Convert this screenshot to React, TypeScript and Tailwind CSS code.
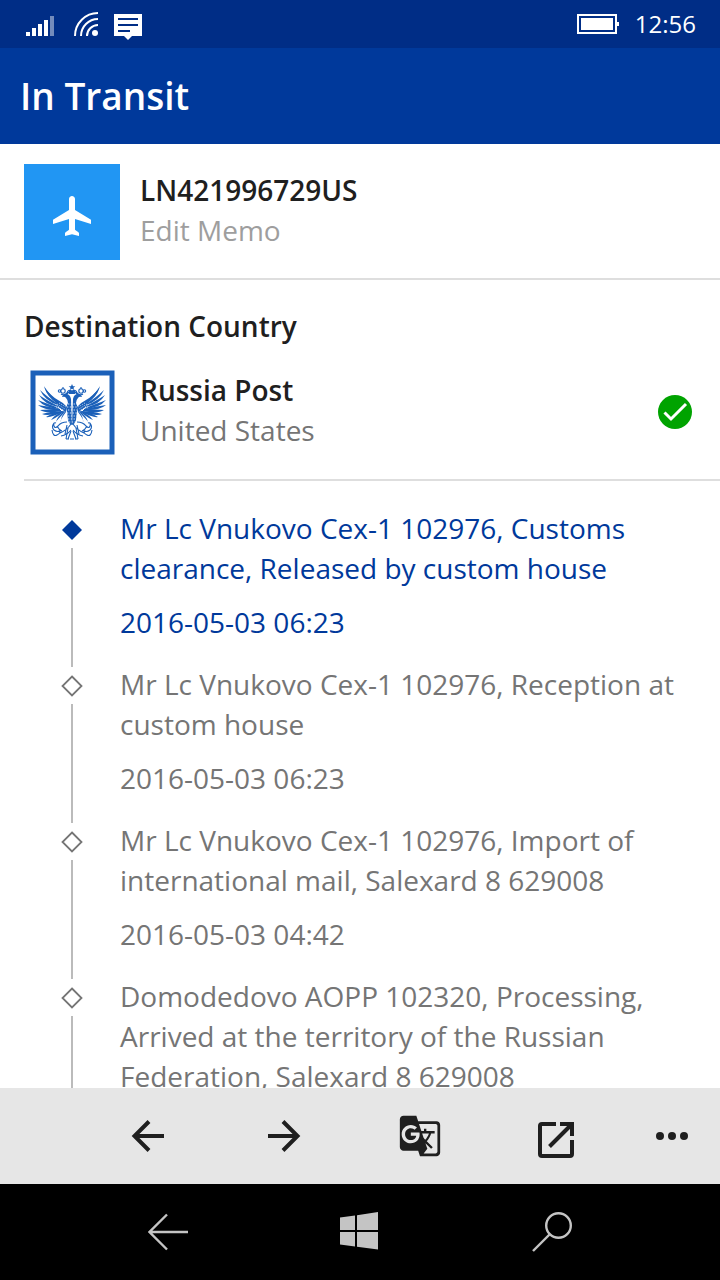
import React from "react";
import { MdGTranslate } from "react-icons/md";

type TrackEvent = {
    text: string;
    time: string;
};

const events: TrackEvent[] = [
    { text: "Mr Lc Vnukovo Cex-1 102976, Customs clearance, Released by custom house", time: "2016-05-03 06:23" },
    { text: "Mr Lc Vnukovo Cex-1 102976, Reception at custom house", time: "2016-05-03 06:23" },
    { text: "Mr Lc Vnukovo Cex-1 102976, Import of international mail, Salexard 8 629008", time: "2016-05-03 04:42" },
    { text: "Domodedovo AOPP 102320, Processing, Arrived at the territory of the Russian Federation, Salexard 8 629008", time: "2016-05-02 21:10" },
];

// wing feathers, from the root on the wing bone out to the tip
const feathers = [
    [28, 31, 14, 15],
    [28, 33, 10, 19],
    [28, 35, 9, 24],
    [29, 37, 8, 29],
    [30, 38, 8, 34],
    [31, 39, 10, 39],
    [32, 40, 12, 43],
    [33, 40, 16, 46],
    [34, 40, 21, 49],
    [35, 40, 26, 51],
    [36, 40, 31, 51],
];

function StatusBar() {
    return (
        <div className="flex h-12 shrink-0 items-center justify-between bg-[#002d86] px-6">
            <svg width="120" height="48" viewBox="24 0 120 48" fill="#fff">
                <path d="M26 32h4v4h-4zM32 28h4v8h-4zM38 24h4v12h-4zM44 20h4v16h-4z" />
                <path d="M50 16h4v20h-4z" opacity=".45" />
                <g fill="none" stroke="#fff" strokeWidth="2">
                    <path d="M75 36A23 23 0 0 1 98 13" />
                    <path d="M81 36A17 17 0 0 1 98 19" />
                    <path d="M87 36A11 11 0 0 1 98 25" />
                </g>
                <circle cx="95" cy="33" r="3" />
                <path fillRule="evenodd" d="M114 14h28v22h-10l-4 4l-4-4h-10zM118 18v2h20v-2zM118 24v2h20v-2zM118 30v2h12v-2z" />
            </svg>
            <div className="flex items-center gap-4">
                <svg width="42" height="20" viewBox="0 0 42 20" fill="#fff">
                    <path fillRule="evenodd" d="M0 0h40v20H0zM2 2v16h36V2z" />
                    <path d="M4 4h32v12H4zM40 8h2v4h-2z" />
                </svg>
                <span className="text-2xl leading-12 text-white">12:56</span>
            </div>
        </div>
    );
}

function PlaneIcon() {
    return (
        <svg width="48" height="48" viewBox="0 0 24 24" fill="#fff">
            <path d="M21.5 16v-2.1L13.5 9V3.5C13.5 2.7 12.8 2 12 2s-1.5.7-1.5 1.5V9l-8 4.9V16l8-2.5v5.2c0 .6-2 1-2 2V22l3.500-.9 3.500.9v-1.300c0-1-2-1.400-2-2v-5.200z" />
        </svg>
    );
}

function Wing() {
    return (
        <g>
            {feathers.map(([x, y, tx, ty]) => {
                const mx = (x + tx) / 2;
                const my = (y + ty) / 2;
                return <path key={`${tx}-${ty}`} d={`M${x} ${y}Q${mx - 3} ${my - 1} ${tx} ${ty}Q${mx - 4} ${my + 4} ${x} ${y + 1}z`} />;
            })}
            <path d="M14 16Q22 26 28 29Q34 32 37 36L36 41Q28 37 26 32Q18 25 14 16z" />
            <path d="M27 33l8 5M29 32l7 4M26 36l8 3" stroke="#fff" strokeWidth=".7" strokeDasharray="1 1.200" />
        </g>
    );
}

function HalfEagle() {
    return (
        <g>
            <Wing />
            <path d="M41 28q-1-5-5-5q-3 0-4 3q3-1 4 1q2 2 2 5q-2 3-1 8l1 9q1 4 4 5z" />
            <g fill="none" stroke="#1b60b9" strokeWidth="1.100">
                <circle cx="33" cy="20" r="2.200" />
                <circle cx="29.500" cy="20" r="1.200" />
                <path d="M33 18v-2M31 23q3 2 6-1q1-4 5-2M36 24l3-3" />
                <path d="M37 51q-6 0-9 4q-3 3-4 0q-1-4 2-3M24 52q-3 4 0 7q4 3 7 0M22 59q1 7 5 5q4-2 3-5M30 62q7-3 11-9M31 65q6-1 10-6M37 54l-2 9M27 55q2 4 5 5" />
                <path d="M38 57l-2 11M41 60l-3 8M36 68h3M40 68h2" />
            </g>
        </g>
    );
}

function RussiaPostLogo() {
    return (
        <svg className="shrink-0" width="96" height="96" viewBox="-6 -6 96 96" role="img" aria-label="Russia Post">
            <rect x="3" y="3" width="79" height="79" fill="#fff" stroke="#1b60b9" strokeWidth="5" />
            <g transform="translate(0 1)">
                <g fill="#1b60b9">
                    <HalfEagle />
                    <g transform="translate(84 0) scale(-1 1)">
                        <HalfEagle />
                    </g>
                    <path d="M42 13l1 2.200 2.300.1-1.800 1.500.6 2.200-2.100-1.200-2.100 1.200.6-2.200-1.800-1.500 2.300-.1zM39 20h6v3h-6z" />
                </g>
                <g stroke="#fff" strokeWidth=".8" strokeDasharray="1.300 1.500" fill="none">
                    <path d="M38 33h9M37 36h11M38 39h9M37 42h11M38 45h9M38 48h9M39 51h7" />
                </g>
            </g>
        </svg>
    );
}

function CheckIcon() {
    return (
        <svg className="shrink-0 self-center" width="34" height="34" viewBox="0 0 34 34" role="img" aria-label="Active">
            <circle cx="17" cy="17" r="17" fill="#00a300" />
            <path d="M6.500 17.500l6.500 6.500L28 9" fill="none" stroke="#fff" strokeWidth="3" />
        </svg>
    );
}

function TimelineItem({ event, current }: { event: TrackEvent; current: boolean }) {
    return (
        <li className={`flex gap-9 ${current ? "text-[#00399b]" : "text-[#757575]"}`}>
            <div className="flex w-6 shrink-0 flex-col items-center">
                <svg className="shrink-0" width="24" height="40" viewBox="0 0 24 40">
                    {current
                        ? <path d="M12 12l10 10-10 10L2 22z" fill="#00399b" />
                        : <path d="M12 12.500l9.500 9.500-9.500 9.500L2.500 22z" fill="none" stroke="#757575" strokeWidth="1.800" />}
                </svg>
                <div className="-mb-[3px] w-[2px] grow bg-[#bbbbbb]" />
            </div>
            <div className="pb-[22px]">
                <p>{event.text}</p>
                <p className="mt-[14px]">{event.time}</p>
            </div>
        </li>
    );
}

function AppBar() {
    return (
        <div className="flex h-24 shrink-0 justify-end bg-[#e6e6e6] text-[#1f1f1f]">
            <button aria-label="Previous" className="flex w-34 items-center justify-center">
                <svg width="48" height="48" viewBox="0 0 48 48" fill="none" stroke="currentColor" strokeWidth="4">
                    <path d="M40 24H11M25 9.500L10.500 24L25 38.500" />
                </svg>
            </button>
            <button aria-label="Next" className="flex w-34 items-center justify-center">
                <svg width="48" height="48" viewBox="0 0 48 48" fill="none" stroke="currentColor" strokeWidth="4">
                    <path d="M8 24h29M23 9.500L37.500 24L23 38.500" />
                </svg>
            </button>
            <button aria-label="Translate" className="flex w-34 items-center justify-center">
                <MdGTranslate size={44} />
            </button>
            <button aria-label="Open in browser" className="flex w-34 items-center justify-center">
                <svg width="48" height="48" viewBox="0 0 48 48" fill="none" stroke="currentColor" strokeWidth="4">
                    <path d="M24 12H10q-2 0-2 2v28q0 2 2 2h28q2 0 2-2V28" />
                    <path d="M28 12h12v12M17.500 34.500L39 13" />
                </svg>
            </button>
            <button aria-label="More" className="flex w-24 items-center justify-center">
                <svg width="32" height="8" viewBox="0 0 32 8" fill="currentColor">
                    <circle cx="4" cy="4" r="4" />
                    <circle cx="16" cy="4" r="4" />
                    <circle cx="28" cy="4" r="4" />
                </svg>
            </button>
        </div>
    );
}

function NavBar() {
    return (
        <div className="grid h-24 shrink-0 grid-cols-3 bg-black px-[10%] text-[#c4c4c4]">
            <button aria-label="Back" className="flex items-center justify-center">
                <svg width="40" height="40" viewBox="0 0 40 40" fill="none" stroke="currentColor" strokeWidth="2.400">
                    <path d="M40 20H2M19 2.500L1.500 20L19 37.500" />
                </svg>
            </button>
            <button aria-label="Start" className="flex items-center justify-center">
                <svg width="40" height="40" viewBox="0 0 40 40" fill="currentColor">
                    <path d="M0 5.500l15-2V18H0zM17 3.200L38 0v18H17zM0 20h15v14.500L0 32.500zM17 20h21v17.500L17 34.700z" />
                </svg>
            </button>
            <button aria-label="Search" className="flex items-center justify-center">
                <svg width="40" height="40" viewBox="0 0 40 40" fill="none" stroke="currentColor" strokeWidth="2.400">
                    <circle cx="26.500" cy="13.500" r="12.300" />
                    <path d="M17.500 22.500L1 39" />
                </svg>
            </button>
        </div>
    );
}

export default function App() {
    return (
        <div className="flex h-screen flex-col bg-white font-['Open_Sans','Noto_Sans',sans-serif] text-[28px] leading-10">
            <StatusBar />
            <header className="flex h-24 shrink-0 items-center bg-[#00399b] px-5">
                <h1 className="text-[37px] font-semibold text-white">In Transit</h1>
            </header>
            <main className="min-h-0 grow overflow-y-auto [scrollbar-width:none]">
                <section className="flex gap-5 border-b-2 border-[#dedede] px-6 pt-5 pb-[18px]">
                    <div className="flex size-24 items-center justify-center bg-[#2196f3] pt-2">
                        <PlaneIcon />
                    </div>
                    <div className="flex flex-col items-start pt-[6px]">
                        <h2 className="font-semibold text-[#1f1f1f]">LN421996729US</h2>
                        <button className="text-[#9e9e9e]">Edit Memo</button>
                    </div>
                </section>
                <section className="ml-6 border-b-2 border-[#dedede] pt-[26px] pb-[19px]">
                    <h2 className="font-semibold text-[#1f1f1f]">Destination Country</h2>
                    <div className="flex gap-5 pt-[18px] pr-7">
                        <RussiaPostLogo />
                        <div className="grow pt-[6px]">
                            <h3 className="font-semibold text-[#1f1f1f]">Russia Post</h3>
                            <p className="text-[#757575]">United States</p>
                        </div>
                        <CheckIcon />
                    </div>
                </section>
                <ul className="pt-[27px] pr-6 pl-[60px]">
                    {events.map((event, i) => (
                        <TimelineItem key={i} event={event} current={i === 0} />
                    ))}
                </ul>
            </main>
            <AppBar />
            <NavBar />
        </div>
    );
}
